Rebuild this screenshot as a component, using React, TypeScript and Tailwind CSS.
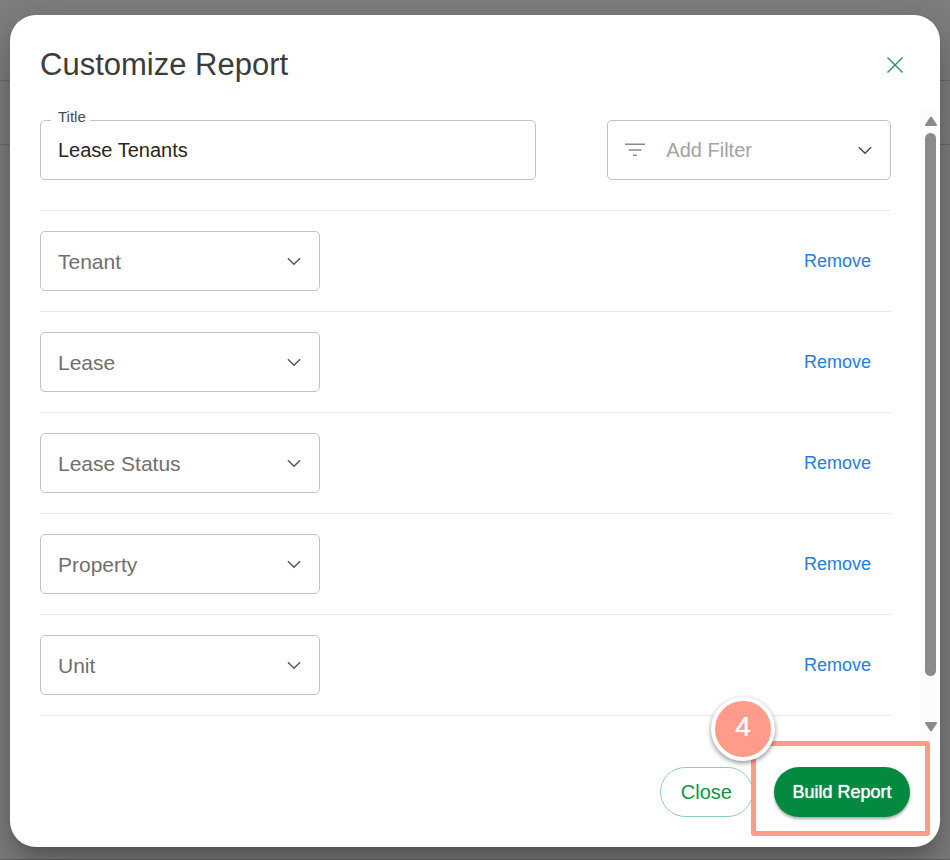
import React from "react";

const columns = ["Tenant", "Lease", "Lease Status", "Property", "Unit"];

function Chevron({ className }: { className: string }) {
  return (
    <svg
      className={`pointer-events-none col-start-1 row-start-1 mr-[18px] self-center justify-self-end ${className}`}
      width="16"
      height="16"
      viewBox="0 0 16 16"
      fill="none"
      stroke="currentColor"
      strokeWidth="1.4"
      aria-hidden="true"
    >
      <path d="M1.9 5.2 L8 11.3 L14.1 5.2" />
    </svg>
  );
}

function ColumnRow({ name }: { name: string }) {
  return (
    <li className="flex items-center justify-between border-b border-[#e8e8e8] py-5 pr-5">
      <div className="grid w-[280px]">
        <select
          aria-label={`Column ${name}`}
          className="col-start-1 row-start-1 h-[60px] w-full appearance-none rounded-[5px] border border-[#c2c2c2] bg-white px-[17px] pt-[2px] text-[21px] text-[#6f6f6f]"
        >
          <option>{name}</option>
        </select>
        <Chevron className="text-[#555555]" />
      </div>
      <button type="button" className="text-[18px] leading-6 text-[#2380dc]">
        Remove
      </button>
    </li>
  );
}

function Scrollbar() {
  return (
    <div className="flex w-[19px] shrink-0 flex-col items-center bg-[#fcfcfc] pt-[6px] pb-[5px] text-[#8b8b8b]" aria-hidden="true">
      <svg width="12" height="10" viewBox="0 0 12 10" fill="currentColor" stroke="currentColor" strokeWidth="2" strokeLinejoin="round">
        <path d="M6 1.5 L11 9 H1 Z" />
      </svg>
      <div className="mt-[7px] mb-[46px] w-[11px] flex-1 rounded-full bg-[#8b8b8b]" />
      <svg width="12" height="10" viewBox="0 0 12 10" fill="currentColor" stroke="currentColor" strokeWidth="2" strokeLinejoin="round">
        <path d="M6 8.5 L11 1 H1 Z" />
      </svg>
    </div>
  );
}

export default function App() {
  return (
    <div className="relative isolate min-h-screen bg-[#7f7f7f] px-[10px] pt-[15px] pb-[13px] font-['Liberation_Sans',Arial,sans-serif]">
      <div className="absolute inset-0 -z-10 flex flex-col border-b border-[#636363]" aria-hidden="true">
        <div className="h-[81px] border-b border-[#6c6c6c]" />
        <div className="h-16 border-b border-[#6c6c6c]" />
      </div>

      <div
        role="dialog"
        aria-labelledby="dialog-title"
        className="rounded-[26px] bg-white shadow-[0_11px_15px_-7px_rgba(0,0,0,0.2),0_24px_38px_3px_rgba(0,0,0,0.14),0_9px_46px_8px_rgba(0,0,0,0.12)]"
      >
        <header className="flex items-center justify-between pt-[30px] pr-[33px] pb-[25px] pl-[30px]">
          <h1 id="dialog-title" className="text-[31px] leading-10 text-[#3c3c3c]">
            Customize Report
          </h1>
          <button type="button" aria-label="Close dialog" className="text-[#189a4b]">
            <svg width="24" height="24" viewBox="0 0 24 24" fill="none" stroke="currentColor" strokeWidth="1.4" aria-hidden="true">
              <path d="M4.5 4.5 L19.5 19.5 M19.5 4.5 L4.5 19.5" />
            </svg>
          </button>
        </header>

        <div className="flex">
          <div className="min-w-0 flex-1 pt-[10px] pr-[30px] pb-[21px] pl-[30px]">
            <div className="grid grid-cols-[7fr_4fr] gap-[71px] pb-[30px]">
              <div className="relative">
                <label htmlFor="report-title" className="absolute -top-[11px] left-[11px] bg-white pr-1 pl-[7px] text-[15px] leading-4 text-[#4a4a4a]">
                  Title
                </label>
                <input
                  id="report-title"
                  type="text"
                  defaultValue="Lease Tenants"
                  className="block h-[60px] w-full rounded-[5px] border border-[#c2c2c2] px-[17px] text-[20px] text-[#262626]"
                />
              </div>
              <div className="grid">
                <select
                  aria-label="Add Filter"
                  className="col-start-1 row-start-1 h-[60px] w-full appearance-none rounded-[5px] border border-[#c2c2c2] bg-white pr-4 pl-[58px] text-[20px] text-[#a3a3a3]"
                >
                  <option>Add Filter</option>
                </select>
                <svg
                  className="pointer-events-none col-start-1 row-start-1 ml-[18px] self-center text-[#8f8a8a]"
                  width="20"
                  height="14"
                  viewBox="0 0 20 14"
                  fill="none"
                  stroke="currentColor"
                  strokeWidth="1.5"
                  aria-hidden="true"
                >
                  <path d="M0 1.3 H20 M3.5 7 H16.5 M8 12.3 H12" />
                </svg>
                <Chevron className="text-[#3f4750]" />
              </div>
            </div>
            <ul className="border-t border-[#e8e8e8]">
              {columns.map((name) => (
                <ColumnRow key={name} name={name} />
              ))}
            </ul>
          </div>
          <Scrollbar />
        </div>

        <footer className="flex justify-end gap-[21px] p-[30px]">
          <button type="button" className="h-[50px] rounded-full border border-[#8fceaa] px-5 text-[20px] text-[#12924a]">
            Close
          </button>
          <div className="relative">
            <button
              type="button"
              className="h-[50px] w-[136px] rounded-full bg-[#048a40] text-[18px] text-white shadow-[0_2px_3px_rgba(0,0,0,0.35)] [text-shadow:0_0_1px_#fff]"
            >
              Build Report
            </button>
            <div className="pointer-events-none absolute -top-[26px] -right-5 -bottom-[19px] -left-[23px] rounded-[3px] border-5 border-[#ff9b8a]">
              <span className="absolute -top-[49px] -left-[45px] flex size-16 items-center justify-center rounded-full border-4 border-white bg-[#ff9b8a] pb-1 text-[28px] text-white shadow-[0_2px_5px_rgba(0,0,0,0.45)] [text-shadow:0_0_1px_#fff]">
                4
              </span>
            </div>
          </div>
        </footer>
      </div>
    </div>
  );
}
